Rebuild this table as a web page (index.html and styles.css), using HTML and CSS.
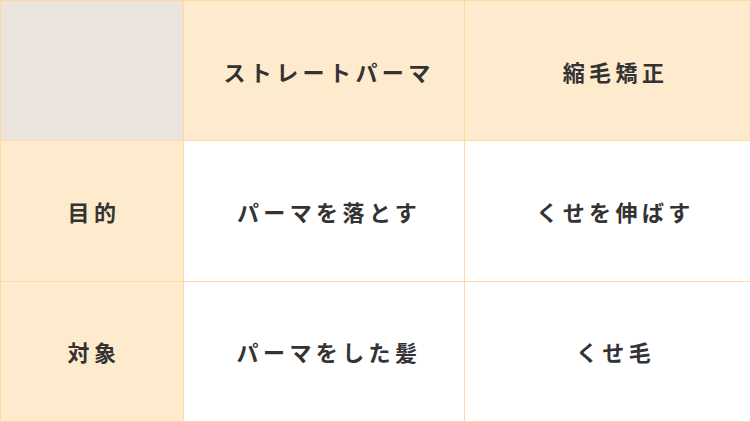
FILE: index.html
```html
<!DOCTYPE html>
<html lang="ja">
<head>
<meta charset="utf-8">
<link rel="stylesheet" href="styles.css">
</head>
<body>
<table class="compare">
  <colgroup>
    <col class="c1"><col class="c2"><col class="c3">
  </colgroup>
  <tr class="head">
    <th class="corner k1"></th>
    <th class="k2">ストレートパーマ</th>
    <th class="k3">縮毛矯正</th>
  </tr>
  <tr>
    <th class="rowhead k1">目的</th>
    <td class="k2">パーマを落とす</td>
    <td class="k3">くせを伸ばす</td>
  </tr>
  <tr>
    <th class="rowhead k1">対象</th>
    <td class="k2">パーマをした髪</td>
    <td class="k3">くせ毛</td>
  </tr>
</table>
</body>
</html>
```
FILE: styles.css
```css
html, body {
  margin: 0;
  padding: 0;
  background: #fff;
}
.compare {
  width: 750px;
  height: 422px;
  border-collapse: collapse;
  table-layout: fixed;
  font-family: "Noto Sans CJK JP", "Noto Sans", sans-serif;
  font-weight: 700;
  font-size: 22px;
  color: #333;
  letter-spacing: 4.4px;
}
.c1 { width: 183px; }
.c2 { width: 281px; }
.c3 { width: 286px; }
.compare tr {
  height: 140px;
}
.compare th, .compare td {
  border: 1px solid #ffd9a3;
  text-align: center;
  vertical-align: middle;
  padding: 0 0 0 4px;
  font-weight: 700;
}
.compare .k2 { padding-left: 10px; }
.compare .k3 { padding-left: 16px; }
.head th {
  background: #feeacd;
}
.head th.corner {
  background: #ebe3de;
}
.rowhead {
  background: #feeacd;
}
.compare td {
  background: #fff;
}
```
